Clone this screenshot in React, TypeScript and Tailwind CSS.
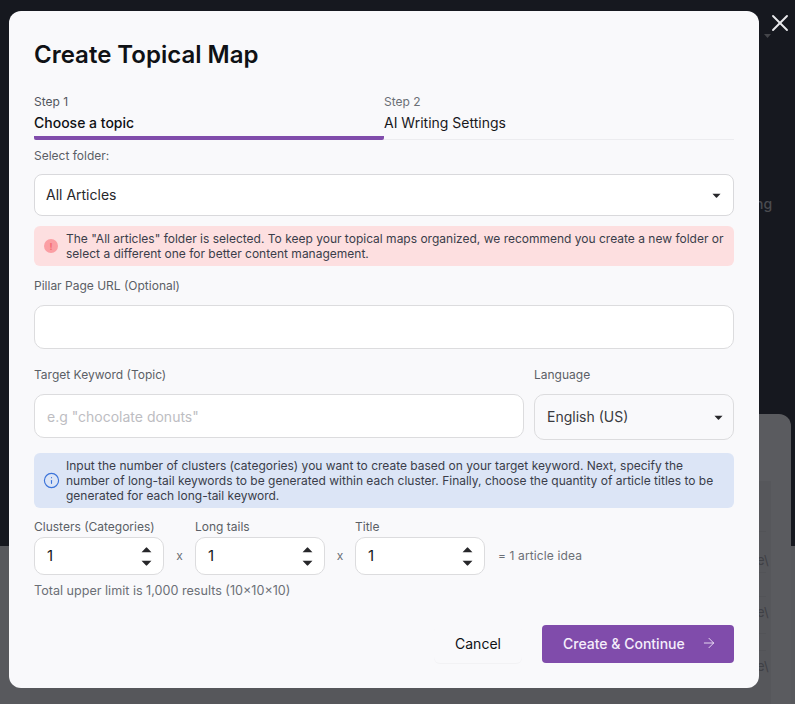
import React from 'react';
import { ArrowRight, Info, X } from 'lucide-react';

const font = 'font-["Inter","Liberation_Sans",sans-serif]';

function Caret({ up = false, big = false }: { up?: boolean; big?: boolean }) {
  return (
    <svg width={big ? 11 : 9} height={big ? 6 : 5} viewBox="0 0 10 5" className={up ? 'rotate-180' : ''}>
      <path d="M0.5 0.5h9L5.6 4.6a.8.8 0 0 1-1.2 0z" fill="#27272a" />
    </svg>
  );
}

function Stepper({ label }: { label: string }) {
  return (
    <div className="flex flex-col w-[130px]">
      <span className="text-[12px] leading-[16px] text-[#5b5f66] mb-[2px] whitespace-nowrap">{label}</span>
      <div className="h-[38px] rounded-[10px] border border-[#dcdcde] bg-white flex items-center justify-between pl-[12px] pr-[11px]">
        <span className="text-[15px] text-[#18181b] pt-[1px]">1</span>
        <div className="flex flex-col gap-[7px]">
          <Caret up big />
          <Caret big />
        </div>
      </div>
    </div>
  );
}

function Times({ width }: { width: string }) {
  return <span className={`${width} self-end h-[38px] flex items-center justify-center text-[12px] text-[#6b6f76]`}>x</span>;
}

export default function App() {
  return (
    <div className={`${font} relative w-[795px] h-[704px] overflow-hidden bg-[#16181f]`}>
      {/* dimmed page behind the modal */}
      <div className="absolute left-0 right-0 top-[546px] bottom-0 bg-[#58595d]" />
      <div className="absolute left-[740px] right-[4px] top-[414px] bottom-0 rounded-tr-[12px] bg-[#5a5b5f]" />
      <div className="absolute left-[30px] right-[24px] top-[481px] bottom-0 bg-[#56575b]">
        <div className="absolute right-[5px] left-[10px] top-[50px] h-[42px] border-y border-[#525357]" />
        <div className="absolute right-[5px] left-[10px] top-[115px] h-[38px] border-y border-[#525357]" />
        <div className="absolute right-[5px] left-[10px] top-[169px] h-[47px] border-t border-[#525357]" />
      </div>
      <div className="absolute left-[757px] top-[551px] text-[13px] text-[#3f4045]">e\</div>
      <div className="absolute left-[757px] top-[603px] text-[13px] text-[#3f4045]">e\</div>
      <div className="absolute left-[757px] top-[657px] text-[13px] text-[#3f4045]">e\</div>
      <div className="absolute left-[755px] top-[193px] text-[14px] font-medium text-[#4a4b50]">ng</div>
      <svg className="absolute left-[764px] top-[34px]" width="7" height="4" viewBox="0 0 7 4">
        <path d="M0 0h7L3.5 4z" fill="#44454a" />
      </svg>
      <button className="absolute left-[766px] top-[9px] text-[#e9e9ec]">
        <X size={28} strokeWidth={1.6} />
      </button>

      <div className="relative ml-[9px] mt-[11px] w-[750px] h-[677px] rounded-[12px] bg-[#f9f9fb] px-[25px] flex flex-col">
        <h1 className="mt-[28px] text-[24px] leading-[32px] font-semibold text-[#0f1115]">Create Topical Map</h1>

        <div className="mt-[23px] flex border-b border-[#ececef] h-[46px]">
          <div className="w-[350px] h-[46px] shrink-0 border-b-[4px] border-[#804cab] rounded-b-[2px]">
            <div className="text-[12px] leading-[16px] text-[#52565d]">Step 1</div>
            <div className="mt-[3px] text-[14px] leading-[20px] font-medium text-[#0f1115]">Choose a topic</div>
          </div>
          <div className="flex-1">
            <div className="text-[12px] leading-[16px] text-[#6b6f76]">Step 2</div>
            <div className="mt-[3px] text-[14px] leading-[20px] text-[#18181b]">AI Writing Settings</div>
          </div>
        </div>

        <label className="mt-[8px] text-[12px] leading-[16px] text-[#5b5f66]">Select folder:</label>
        <div className="mt-[10px] h-[42px] shrink-0 rounded-[8px] border border-[#d9d9dc] bg-white flex items-center justify-between pl-[11px] pr-[12px]">
          <span className="text-[14px] text-[#27272a] pb-[2px]">All Articles</span>
          <Caret />
        </div>

        <div className="mt-[10px] h-[40px] shrink-0 rounded-[6px] bg-[#fddfe0] flex items-center pl-[10px]">
          <div className="w-[14px] h-[14px] rounded-full bg-[#fb9ea3] flex items-center justify-center text-[9px] leading-none font-bold text-[#f46a72]">!</div>
          <p className="ml-[8px] text-[12px] leading-[15px] text-[#3a3d4a]">
            The "All articles" folder is selected. To keep your topical maps organized, we recommend you create a new folder or
            <br />
            select a different one for better content management.
          </p>
        </div>

        <label className="mt-[12px] text-[12px] leading-[16px] text-[#5b5f66]">Pillar Page URL (Optional)</label>
        <div className="mt-[11px] h-[44px] shrink-0 rounded-[10px] border border-[#dcdcde] bg-white" />

        <div className="mt-[18px] flex gap-[10px]">
          <div className="w-[490px] flex flex-col">
            <label className="text-[12px] leading-[16px] text-[#5b5f66]">Target Keyword (Topic)</label>
            <div className="mt-[11px] h-[44px] rounded-[10px] border border-[#dcdcde] bg-white flex items-center pl-[12px]">
              <span className="text-[14px] text-[#bdbdc2]">e.g "chocolate donuts"</span>
            </div>
          </div>
          <div className="flex-1 flex flex-col">
            <label className="text-[12px] leading-[16px] text-[#5b5f66]">Language</label>
            <div className="mt-[11px] h-[46px] rounded-[10px] border border-[#dcdcde] bg-[#f9f9fb] flex items-center justify-between pl-[12px] pr-[10px]">
              <span className="text-[14px] text-[#3a3a40] pb-[2px]">English (US)</span>
              <Caret />
            </div>
          </div>
        </div>

        <div className="mt-[13px] h-[55px] shrink-0 rounded-[6px] bg-[#dce5f6] flex items-center pl-[9px]">
          <Info size={17} strokeWidth={1.6} className="text-[#3b73d9] shrink-0" />
          <p className="ml-[6px] text-[12px] leading-[15px] text-[#3a3d4a]">
            Input the number of clusters (categories) you want to create based on your target keyword. Next, specify the
            <br />
            number of long-tail keywords to be generated within each cluster. Finally, choose the quantity of article titles to be
            <br />
            generated for each long-tail keyword.
          </p>
        </div>

        <div className="mt-[11px] flex items-start">
          <Stepper label="Clusters (Categories)" />
          <Times width="w-[31px]" />
          <Stepper label="Long tails" />
          <Times width="w-[30px]" />
          <Stepper label="Title" />
          <span className="ml-[13px] mt-[29px] text-[12px] leading-[16px] text-[#6b6f76] tracking-[0.01em]">= 1 article idea</span>
        </div>

        <p className="mt-[8px] text-[12.6px] leading-[16px] text-[#6b6f76]">Total upper limit is 1,000 results (10×10×10)</p>

        <div className="mt-[26px] flex justify-end items-center gap-[20px]">
          <button className="w-[88px] h-[38px] pb-[2px] rounded-[6px] bg-[#f9f9fb] shadow-[0_1px_1px_rgba(0,0,0,0.03)] text-[14px] font-normal text-[#0f1115]">Cancel</button>
          <button className="w-[192px] h-[38px] pb-[2px] rounded-[4px] bg-[#804cab] text-[#f5eefb] text-[14px] font-medium flex items-center pl-[21px] gap-[16px]">
            Create &amp; Continue
            <ArrowRight size={16} strokeWidth={1.3} />
          </button>
        </div>
      </div>
    </div>
  );
}
